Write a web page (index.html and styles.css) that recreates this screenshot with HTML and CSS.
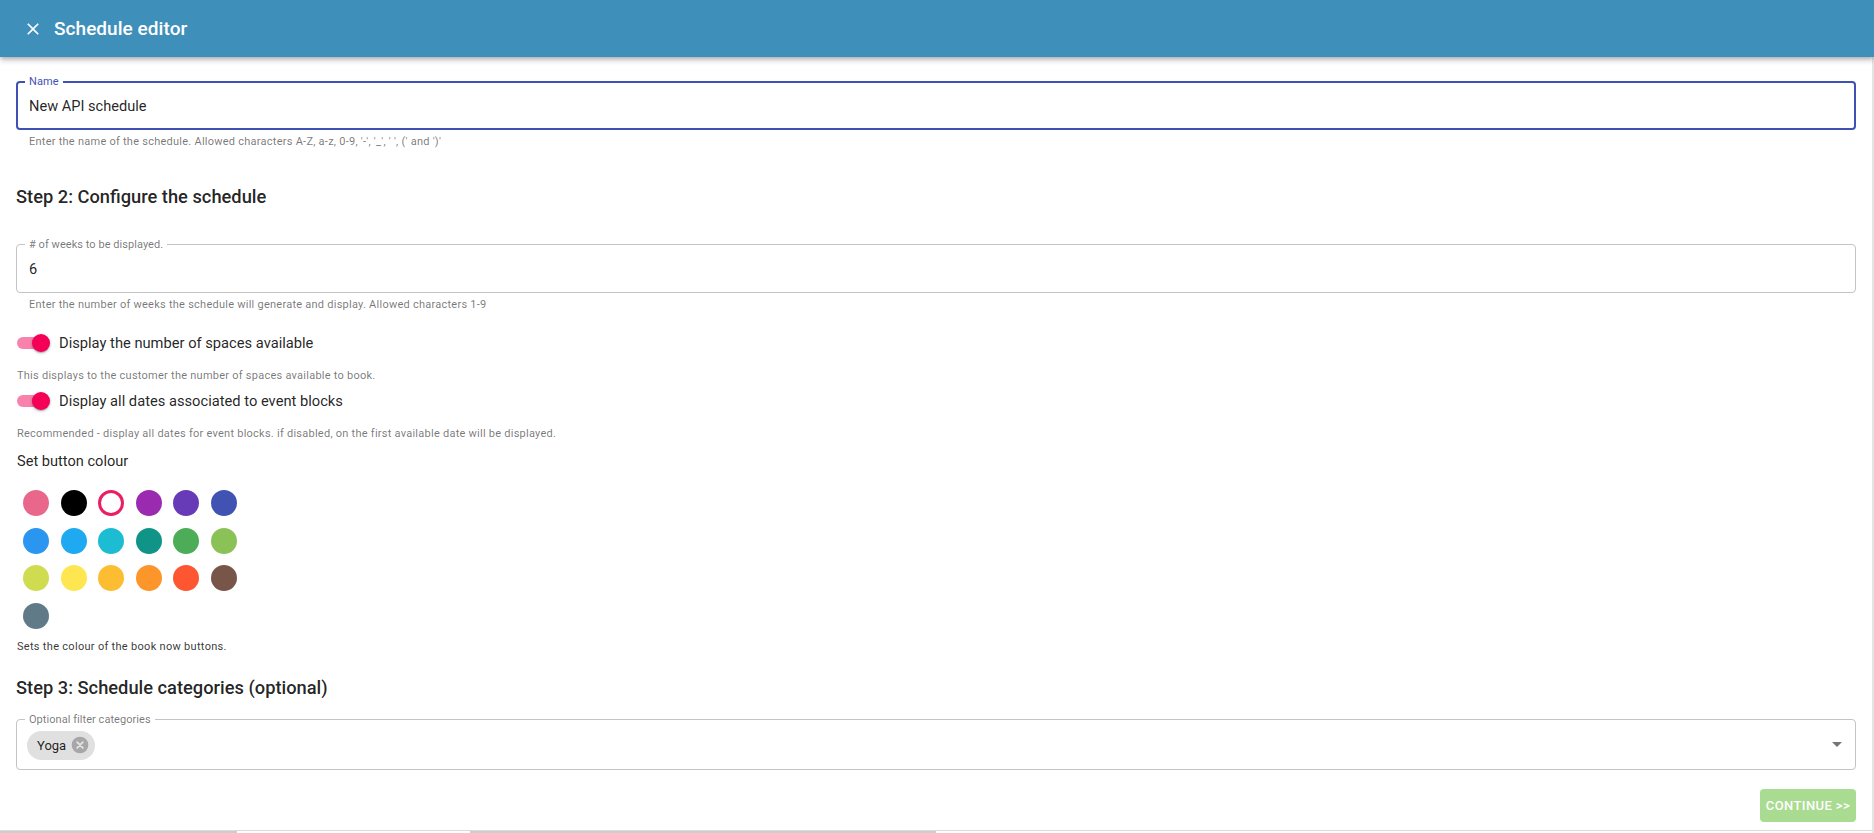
FILE: index.html
```html
<!DOCTYPE html>
<html lang="en">
<head>
<meta charset="utf-8">
<title>Schedule editor</title>
<link rel="stylesheet" href="styles.css">
</head>
<body>
<header class="appbar">
  <svg class="close-icon" viewBox="0 0 24 24" aria-hidden="true"><path fill="#fff" d="M19 6.41L17.59 5 12 10.59 6.41 5 5 6.41 10.59 12 5 17.59 6.41 19 12 13.41 17.59 19 19 17.59 13.41 12z"/></svg>
  <h1 class="appbar-title">Schedule editor</h1>
</header>
<main class="editor">
  <div class="field field--focused">
    <span class="field-label">Name</span>
    <span class="field-value">New API schedule</span>
  </div>
  <p class="helper helper--field">Enter the name of the schedule. Allowed characters A-Z, a-z, 0-9, '-', '_', ' ', (' and ')'</p>

  <h2 class="section-title">Step 2: Configure the schedule</h2>
  <div class="field field--weeks">
    <span class="field-label">&#35; of weeks to be displayed.</span>
    <span class="field-value">6</span>
  </div>
  <p class="helper helper--field">Enter the number of weeks the schedule will generate and display. Allowed characters 1-9</p>

  <div class="switch-row switch-row--first">
    <span class="switch"><span class="switch-track"></span><span class="switch-thumb"></span></span>
    <span class="switch-label">Display the number of spaces available</span>
  </div>
  <p class="helper helper--switch">This displays to the customer the number of spaces available to book.</p>

  <div class="switch-row switch-row--second">
    <span class="switch"><span class="switch-track"></span><span class="switch-thumb"></span></span>
    <span class="switch-label">Display all dates associated to event blocks</span>
  </div>
  <p class="helper helper--switch">Recommended - display all dates for event blocks. if disabled, on the first available date will be displayed.</p>

  <p class="colour-title">Set button colour</p>
  <div class="swatches">
    <span class="swatch swatch--pink"></span>
    <span class="swatch swatch--black"></span>
    <span class="swatch swatch--selected"></span>
    <span class="swatch swatch--purple"></span>
    <span class="swatch swatch--deep-purple"></span>
    <span class="swatch swatch--indigo"></span>
    <span class="swatch swatch--blue"></span>
    <span class="swatch swatch--light-blue"></span>
    <span class="swatch swatch--cyan"></span>
    <span class="swatch swatch--teal"></span>
    <span class="swatch swatch--green"></span>
    <span class="swatch swatch--light-green"></span>
    <span class="swatch swatch--lime"></span>
    <span class="swatch swatch--yellow"></span>
    <span class="swatch swatch--amber"></span>
    <span class="swatch swatch--orange"></span>
    <span class="swatch swatch--deep-orange"></span>
    <span class="swatch swatch--brown"></span>
    <span class="swatch swatch--blue-grey"></span>
  </div>
  <p class="colour-helper">Sets the colour of the book now buttons.</p>

  <h2 class="section-title section-title--step3">Step 3: Schedule categories (optional)</h2>
  <div class="field field--select">
    <span class="field-label">Optional filter categories</span>
    <span class="chip">
      <span class="chip-label">Yoga</span>
      <svg class="chip-delete" viewBox="0 0 24 24" aria-hidden="true"><circle cx="12" cy="12" r="10" fill="#a7a7a7"/><path d="M8.6 8.6l6.8 6.8M15.4 8.6l-6.8 6.8" stroke="#e4e4e4" stroke-width="2.2" stroke-linecap="round"/></svg>
    </span>
    <span class="select-arrow"></span>
  </div>

  <button class="continue-btn" type="button">Continue &gt;&gt;</button>

  <div class="strip">
    <span class="strip-seg strip-seg--a"></span>
    <span class="strip-gap strip-gap--a"></span>
    <span class="strip-seg strip-seg--b"></span>
  </div>
</main>
</body>
</html>
```

FILE: styles.css
```css
* { box-sizing: border-box; }

html, body {
  margin: 0;
  height: 833px;
  overflow: hidden;
}

body {
  font-family: Roboto, "Noto Sans", "Liberation Sans", sans-serif;
  background: #fff;
  color: rgba(0, 0, 0, 0.87);
}

/* App bar */
.appbar {
  position: relative;
  z-index: 2;
  height: 57px;
  background: #3f8fbb;
  display: flex;
  align-items: center;
  padding-left: 23px;
  box-shadow: 0 2px 4px -1px rgba(0,0,0,0.2), 0 4px 5px 0 rgba(0,0,0,0.12), 0 1px 8px 0 rgba(0,0,0,0.1);
}

.close-icon {
  width: 20px;
  height: 20px;
  flex: none;
}

.appbar-title {
  margin: 0 0 0 11px;
  font-size: 19px;
  font-weight: 500;
  color: #fff;
  letter-spacing: 0.05px;
}

/* Main column */
.editor {
  height: 776px;
  padding: 24px 16px 0;
  border-right: 2px solid #e4e4e4;
  display: flex;
  flex-direction: column;
}

/* Outlined fields */
.field {
  position: relative;
  flex: none;
  height: 49px;
  border: 1px solid #c4c4c4;
  border-radius: 4px;
  display: flex;
  align-items: center;
  padding: 0 12px;
}

.field--focused {
  border: 2px solid #3f51b5;
  padding: 0 11px;
}

.field--weeks {
  margin-top: 36px;
}

.field--select {
  height: 51px;
  margin-top: 20px;
  align-items: flex-start;
  padding: 11px 10px 0;
}

.field-label {
  position: absolute;
  top: -7px;
  left: 8px;
  padding: 0 4px;
  background: #fff;
  font-size: 11px;
  line-height: 13px;
  color: rgba(0, 0, 0, 0.54);
  letter-spacing: 0.05px;
}

.field--focused .field-label {
  top: -8px;
  left: 7px;
  color: #3f51b5;
}

.field-value {
  font-size: 14.6px;
  color: rgba(0, 0, 0, 0.87);
}

/* Helper texts */
.helper {
  margin: 5px 0 0;
  font-size: 11px;
  line-height: 14px;
  color: rgba(0, 0, 0, 0.54);
  letter-spacing: 0.25px;
}

.helper--field {
  padding-left: 13px;
}

.helper--switch {
  margin-top: 14px;
  padding-left: 1px;
}

/* Headings */
.section-title {
  margin: 37px 0 0;
  font-size: 18.3px;
  line-height: 22px;
  font-weight: 500;
  color: rgba(0, 0, 0, 0.87);
}

.section-title--step3 {
  margin-top: 23px;
}

/* Switches */
.switch-row {
  display: flex;
  align-items: center;
  height: 24px;
}

.switch-row--first { margin-top: 19px; }
.switch-row--second { margin-top: 6px; }

.switch {
  position: relative;
  width: 34px;
  height: 24px;
  margin-left: 1px;
  flex: none;
}

.switch-track {
  position: absolute;
  left: 0;
  top: 6px;
  width: 28px;
  height: 12px;
  border-radius: 6px;
  background: #f882ab;
}

.switch-thumb {
  position: absolute;
  left: 15px;
  top: 3px;
  width: 18px;
  height: 18px;
  border-radius: 50%;
  background: #f50057;
  box-shadow: 0 1px 3px rgba(0,0,0,0.3), 0 1px 1px rgba(0,0,0,0.14);
}

.switch-label {
  margin-left: 8px;
  font-size: 14.7px;
  color: rgba(0, 0, 0, 0.87);
}

/* Colour picker */
.colour-title {
  margin: 10px 0 0;
  padding-left: 1px;
  font-size: 14.6px;
  line-height: 20px;
  color: rgba(0, 0, 0, 0.87);
}

.swatches {
  margin: 19px 0 0 7px;
  display: grid;
  grid-template-columns: repeat(6, 26px);
  grid-auto-rows: 26px;
  column-gap: 11.5px;
  row-gap: 11.5px;
}

.swatch {
  width: 26px;
  height: 26px;
  border-radius: 50%;
}

.swatch--pink { background: #e9678b; }
.swatch--black { background: #000; }
.swatch--selected { background: #fff; border: 3px solid #e91e63; }
.swatch--purple { background: #9a2aaf; }
.swatch--deep-purple { background: #673ab7; }
.swatch--indigo { background: #4053b3; }
.swatch--blue { background: #2b96ef; }
.swatch--light-blue { background: #1ea9f0; }
.swatch--cyan { background: #1cbcd3; }
.swatch--teal { background: #109488; }
.swatch--green { background: #4cac58; }
.swatch--light-green { background: #8bc258; }
.swatch--lime { background: #d0dc50; }
.swatch--yellow { background: #fee650; }
.swatch--amber { background: #fdbd33; }
.swatch--orange { background: #fd962a; }
.swatch--deep-orange { background: #fd5631; }
.swatch--brown { background: #785549; }
.swatch--blue-grey { background: #617a87; }

.colour-helper {
  margin: 11px 0 0;
  padding-left: 1px;
  font-size: 11px;
  line-height: 14px;
  color: rgba(0, 0, 0, 0.8);
  letter-spacing: 0.3px;
}

/* Chip */
.chip {
  display: inline-flex;
  align-items: center;
  height: 29px;
  border-radius: 15px;
  background: #e0e0e0;
  padding: 0 5px 0 10px;
}

.chip-label {
  font-size: 13px;
  color: rgba(0, 0, 0, 0.87);
}

.chip-delete {
  width: 20px;
  height: 20px;
  margin-left: 4px;
}

.select-arrow {
  position: absolute;
  right: 13px;
  top: 22px;
  width: 0;
  height: 0;
  border-left: 5px solid transparent;
  border-right: 5px solid transparent;
  border-top: 5px solid #757575;
}

/* Continue */
.continue-btn {
  align-self: flex-end;
  margin-top: 19px;
  width: 96px;
  height: 33px;
  border: none;
  border-radius: 4px;
  background: #a9dc91;
  color: #fff;
  font-family: Roboto, "Noto Sans", sans-serif;
  font-size: 13px;
  font-weight: 500;
  letter-spacing: 0.4px;
  text-transform: uppercase;
  padding: 0;
}

/* Bottom scroll strip */
.strip {
  margin: auto -16px 0;
  height: 3px;
  border-top: 1px solid #dadada;
  display: flex;
}

.strip-seg {
  height: 2px;
  background: #cdcdcd;
}

.strip-seg--a { width: 237px; }
.strip-gap--a { width: 233px; }
.strip-seg--b { width: 466px; }
```
